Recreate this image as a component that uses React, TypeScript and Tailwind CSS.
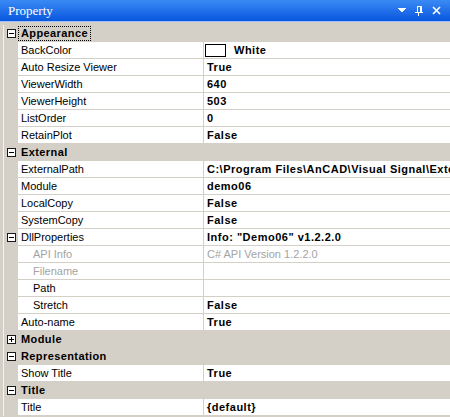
import React from 'react';

type Row =
  | { kind: 'cat'; label: string; open: boolean; focus?: boolean }
  | { kind: 'prop'; label: string; value?: string; indent?: boolean; disabled?: boolean; box?: boolean; swatch?: boolean };

const rows: Row[] = [
  { kind: 'cat', label: 'Appearance', open: true, focus: true },
  { kind: 'prop', label: 'BackColor', value: 'White', swatch: true },
  { kind: 'prop', label: 'Auto Resize Viewer', value: 'True' },
  { kind: 'prop', label: 'ViewerWidth', value: '640' },
  { kind: 'prop', label: 'ViewerHeight', value: '503' },
  { kind: 'prop', label: 'ListOrder', value: '0' },
  { kind: 'prop', label: 'RetainPlot', value: 'False' },
  { kind: 'cat', label: 'External', open: true },
  { kind: 'prop', label: 'ExternalPath', value: 'C:\\Program Files\\AnCAD\\Visual Signal\\Exte' },
  { kind: 'prop', label: 'Module', value: 'demo06' },
  { kind: 'prop', label: 'LocalCopy', value: 'False' },
  { kind: 'prop', label: 'SystemCopy', value: 'False' },
  { kind: 'prop', label: 'DllProperties', value: 'Info: "Demo06" v1.2.2.0', box: true },
  { kind: 'prop', label: 'API Info', value: 'C# API Version 1.2.2.0', indent: true, disabled: true },
  { kind: 'prop', label: 'Filename', value: '', indent: true, disabled: true },
  { kind: 'prop', label: 'Path', value: '', indent: true },
  { kind: 'prop', label: 'Stretch', value: 'False', indent: true },
  { kind: 'prop', label: 'Auto-name', value: 'True' },
  { kind: 'cat', label: 'Module', open: false },
  { kind: 'cat', label: 'Representation', open: true },
  { kind: 'prop', label: 'Show Title', value: 'True' },
  { kind: 'cat', label: 'Title', open: true },
  { kind: 'prop', label: 'Title', value: '{default}' },
];

const ToggleBox = ({ open }: { open: boolean }) => (
  <svg width="9" height="9" viewBox="0 0 9 9" className="block" shapeRendering="crispEdges">
    <rect x="0.5" y="0.5" width="8" height="8" fill="#ffffff" stroke="#1a1a1a" />
    <line x1="2" y1="4.5" x2="7" y2="4.5" stroke="#000" />
    {!open && <line x1="4.5" y1="2" x2="4.5" y2="7" stroke="#000" />}
  </svg>
);

export default function App() {
  return (
    <div
      className="w-[450px] h-[417px] overflow-hidden bg-[#d4d0c8] text-[11px] text-black"
      style={{ fontFamily: '"Liberation Sans", Arial, sans-serif' }}
    >
      {/* Caption */}
      <div className="h-[21px] flex items-center justify-between bg-gradient-to-b from-[#3a8af5] to-[#0756de] text-white">
        <span className="pl-[8px] text-[13px] leading-none" style={{ fontFamily: '"Liberation Serif", "Times New Roman", serif' }}>
          Property
        </span>
        <div className="flex items-center gap-[9px] pr-[9px]">
          <svg width="8" height="5" viewBox="0 0 8 5" shapeRendering="crispEdges">
            <polygon points="0,0 8,0 4,4.5" fill="#fff" />
          </svg>
          <svg width="8" height="10" viewBox="0 0 8 10" shapeRendering="crispEdges">
            <rect x="2" y="0" width="4" height="1" fill="#fff" />
            <rect x="2" y="0" width="1" height="6" fill="#fff" />
            <rect x="5" y="0" width="2" height="6" fill="#fff" />
            <rect x="0" y="6" width="8" height="1" fill="#fff" />
            <rect x="3" y="7" width="1" height="3" fill="#fff" />
          </svg>
          <svg width="9" height="9" viewBox="0 0 9 9">
            <path d="M1 1 L8 8 M8 1 L1 8" stroke="#fff" strokeWidth="1.6" />
          </svg>
        </div>
      </div>
      <div className="h-[1px] bg-[#9ec2f7]" />

      {/* Grid */}
      <div className="pt-[3px] pl-[3px]">
        <div className="border-l border-[#f4f3ef]">
          {rows.map((r, i) =>
            r.kind === 'cat' ? (
              <div key={i} className="h-[17px] flex items-center bg-[#d4d0c8]">
                <div className="w-[14px] flex items-center justify-center pl-[1px]">
                  <ToggleBox open={r.open} />
                </div>
                <span
                  className={`font-bold tracking-[0.4px] leading-[13px] px-[2px] ${r.focus ? 'border border-dotted border-black' : 'border border-transparent'}`}
                >
                  {r.label}
                </span>
              </div>
            ) : (
              <div key={i} className="h-[17px] flex">
                <div className="w-[14px] flex items-center justify-center pl-[1px] bg-[#d4d0c8]">
                  {r.box && <ToggleBox open={true} />}
                </div>
                <div
                  className={`w-[185px] bg-white border-b border-[#d4d0c8] flex items-center ${r.indent ? 'pl-[15px]' : 'pl-[3px]'} ${r.disabled ? 'text-[#a3a3a3]' : ''}`}
                >
                  {r.label}
                </div>
                <div className="w-[1px] bg-[#d4d0c8]" />
                <div
                  className={`flex-1 bg-white border-b border-[#d4d0c8] flex items-center whitespace-nowrap overflow-hidden pl-[3px] ${r.disabled ? 'text-[#a3a3a3]' : 'font-bold tracking-[0.5px]'}`}
                >
                  {r.swatch && (
                    <span className="inline-block w-[21px] h-[13px] border border-black bg-white mr-[8px] -ml-[2px]" />
                  )}
                  {r.value}
                </div>
              </div>
            )
          )}
        </div>
      </div>
    </div>
  );
}
